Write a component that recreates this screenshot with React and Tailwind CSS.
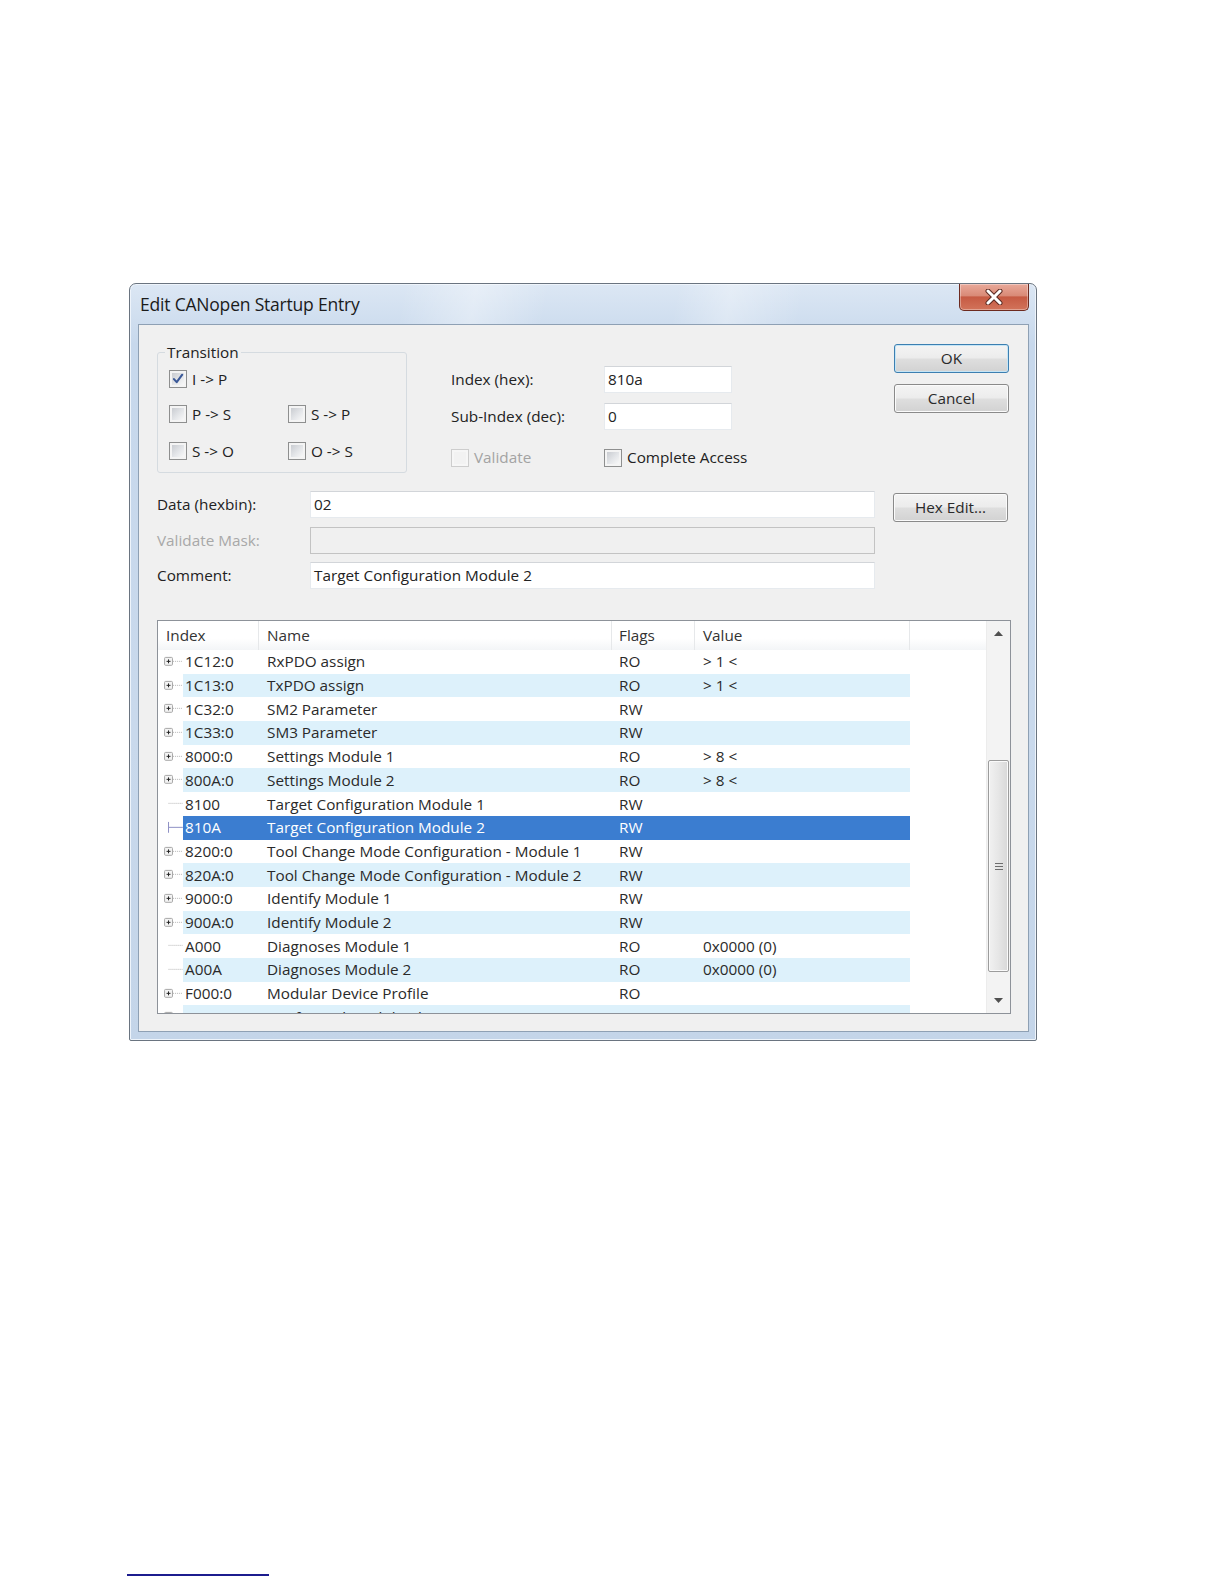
import React from "react";

const rows = [
  { idx: "1C12:0", name: "RxPDO assign", flags: "RO", value: "> 1 <", exp: true },
  { idx: "1C13:0", name: "TxPDO assign", flags: "RO", value: "> 1 <", exp: true },
  { idx: "1C32:0", name: "SM2 Parameter", flags: "RW", value: "", exp: true },
  { idx: "1C33:0", name: "SM3 Parameter", flags: "RW", value: "", exp: true },
  { idx: "8000:0", name: "Settings Module 1", flags: "RO", value: "> 8 <", exp: true },
  { idx: "800A:0", name: "Settings Module 2", flags: "RO", value: "> 8 <", exp: true },
  { idx: "8100", name: "Target Configuration Module 1", flags: "RW", value: "", exp: false },
  { idx: "810A", name: "Target Configuration Module 2", flags: "RW", value: "", exp: false, sel: true },
  { idx: "8200:0", name: "Tool Change Mode Configuration - Module 1", flags: "RW", value: "", exp: true },
  { idx: "820A:0", name: "Tool Change Mode Configuration - Module 2", flags: "RW", value: "", exp: true },
  { idx: "9000:0", name: "Identify Module 1", flags: "RW", value: "", exp: true },
  { idx: "900A:0", name: "Identify Module 2", flags: "RW", value: "", exp: true },
  { idx: "A000", name: "Diagnoses Module 1", flags: "RO", value: "0x0000 (0)", exp: false },
  { idx: "A00A", name: "Diagnoses Module 2", flags: "RO", value: "0x0000 (0)", exp: false },
  { idx: "F000:0", name: "Modular Device Profile", flags: "RO", value: "", exp: true },
  { idx: "F030:0", name: "Configured Module Ident List", flags: "RO", value: "", exp: true },
];

function Check({ checked, disabled }) {
  return (
    <span
      className={
        disabled
          ? "block w-[18px] h-[18px] flex-none border border-[#cdcdcd] bg-[#f6f6f6] p-[2px]"
          : "block w-[18px] h-[18px] flex-none border border-[#8e8f8f] bg-[#f4f4f4] p-[2px]"
      }
    >
      <span
        className={
          disabled
            ? "block w-full h-full bg-[#f2f2f2]"
            : "block w-full h-full bg-[linear-gradient(135deg,#c9ccd1,#e4e6e9_55%,#f8f8f8)]"
        }
      >
        {checked && (
          <svg viewBox="0 0 11 11" className="block w-full h-full">
            <path d="M1.8 5.6 L4.3 8.4 L9.4 1.6" fill="none" stroke="#3b5998" strokeWidth="1.9" strokeLinecap="round" strokeLinejoin="round" />
          </svg>
        )}
      </span>
    </span>
  );
}

function Btn({ children, def, className = "" }) {
  return (
    <div
      className={
        (def
          ? "border-[#3c7fb1] shadow-[inset_0_0_0_1px_#c5e5f6] "
          : "border-[#8a8a8a] shadow-[inset_0_0_0_1px_#fbfbfb] ") +
        "w-[115px] h-[29px] rounded-[3px] border bg-[linear-gradient(#f4f4f4,#ececec_48%,#dedede_52%,#d2d2d2)] flex items-center justify-center text-[15.3px] text-[#2a2a2a] " +
        className
      }
    >
      {children}
    </div>
  );
}

function Input({ w, children, disabled }) {
  return (
    <div
      className={
        (disabled
          ? "bg-[#f0f0f0] border-[#c3c3c3] "
          : "bg-white border-[#e6eaee] border-t-[#d2d5d9] ") +
        "h-[27px] border flex items-center pl-[3px] text-[15.3px] text-[#222]"
      }
      style={{ width: w }}
    >
      {children}
    </div>
  );
}

function Tree({ exp, sel }) {
  return (
    <svg width="25" height="23.69" viewBox="0 0 25 24" className="block flex-none">
      {exp ? (
        <>
          <rect x="6.5" y="7.5" width="8" height="8" rx="1" fill="#f4f4f4" stroke="#a6a6a6" />
          <path d="M8.5 11.5 H12.5 M10.5 9.5 V13.5" stroke="#222" strokeWidth="1" />
          <path d="M15 11.5 H25" stroke="#b5b5b5" strokeWidth="1" strokeDasharray="1 1" />
        </>
      ) : (
        <>
          {sel && <path d="M10.5 6 V17" stroke="#8d8fc4" strokeWidth="1" />}
          <path d="M10.5 11.5 H25" stroke={sel ? "#8d8fc4" : "#b5b5b5"} strokeWidth="1" strokeDasharray={sel ? "0" : "1 1"} />
        </>
      )}
    </svg>
  );
}

function Triangle({ up }) {
  return (
    <svg width="9" height="5" viewBox="0 0 9 5" className="block">
      <path d={up ? "M0 5 L4.5 0 L9 5 Z" : "M0 0 L4.5 5 L9 0 Z"} fill="#505050" />
    </svg>
  );
}

export default function App() {
  return (
    <div className="w-[1224px] h-[1584px] bg-white overflow-hidden pt-[283px] pl-[127px] font-['Open_Sans','Noto_Sans',sans-serif] text-[#222]">
      {/* Window */}
      <div className="ml-[2px] w-[908px] h-[758px] rounded-t-[7px] rounded-b-[2px] border border-[#6a7480] bg-[linear-gradient(180deg,#dce7f4,#c7d8ec_8%,#c9d9ec_60%,#c4d5e9)] flex flex-col shadow-[inset_0_0_0_1px_#eef4fb]">
        {/* Title bar */}
        <div className="h-[40px] flex items-start bg-[linear-gradient(100deg,rgba(255,255,255,0)_0%,rgba(255,255,255,0)_30%,rgba(255,255,255,0.35)_38%,rgba(255,255,255,0)_46%,rgba(255,255,255,0)_60%,rgba(255,255,255,0.3)_66%,rgba(255,255,255,0)_74%)]">
          <div className="pl-[10px] pt-[7px] text-[17.5px] text-[#1b1b1b] tracking-[-0.2px]">Edit CANopen Startup Entry</div>
          <div className="ml-auto mr-[7px] w-[70px] h-[27px] rounded-b-[5px] border border-t-0 border-[#6d2a1f] bg-[linear-gradient(#e9a99a,#d98a77_45%,#c65a43_50%,#d2735a)] flex items-center justify-center shadow-[inset_0_0_0_1px_rgba(255,255,255,0.35)]">
            <svg width="18" height="16" viewBox="0 0 18 16">
              <path d="M3 2 L15 14 M15 2 L3 14" stroke="#5a2a22" strokeWidth="5" strokeLinecap="round" />
              <path d="M3 2 L15 14 M15 2 L3 14" stroke="#ffffff" strokeWidth="3" strokeLinecap="round" />
            </svg>
          </div>
        </div>

        {/* Client area */}
        <div className="ml-[8px] w-[891px] h-[708px] border border-[#8ea0b4] bg-[#f0f0f0] flex flex-col text-[15.3px]">
          {/* Top section */}
          <div className="flex items-start">
            <fieldset className="ml-[18px] mt-[17px] w-[250px] h-[131px] border border-[#d5dbe0] rounded-[3px] pl-[11px]">
              <legend className="ml-[-4px] px-[2px] h-[20px] leading-[20px] text-[#222]">Transition</legend>
              <div className="flex flex-col">
                <div className="h-[20px] mt-[7px] flex items-center">
                  <div className="flex items-center gap-[5px]">
                    <Check checked />
                    <span>I -&gt; P</span>
                  </div>
                </div>
                <div className="h-[20px] mt-[15px] flex items-center">
                  <div className="w-[119px] flex items-center gap-[5px]">
                    <Check />
                    <span>P -&gt; S</span>
                  </div>
                  <div className="flex items-center gap-[5px]">
                    <Check />
                    <span>S -&gt; P</span>
                  </div>
                </div>
                <div className="h-[20px] mt-[17px] flex items-center">
                  <div className="w-[119px] flex items-center gap-[5px]">
                    <Check />
                    <span>S -&gt; O</span>
                  </div>
                  <div className="flex items-center gap-[5px]">
                    <Check />
                    <span>O -&gt; S</span>
                  </div>
                </div>
              </div>
            </fieldset>

            <div className="ml-[44px] mt-[41px] w-[281px] flex-none flex flex-col">
              <div className="flex items-center h-[27px]">
                <div className="w-[153px] flex-none">Index (hex):</div>
                <Input w={128}>810a</Input>
              </div>
              <div className="flex items-center h-[27px] mt-[10px]">
                <div className="w-[153px] flex-none">Sub-Index (dec):</div>
                <Input w={128}>0</Input>
              </div>
              <div className="flex items-center h-[27px] mt-[14px]">
                <div className="w-[153px] flex-none flex items-center gap-[5px] text-[#a3a3a3]">
                  <Check disabled />
                  <span>Validate</span>
                </div>
                <div className="flex-none flex items-center gap-[5px] whitespace-nowrap">
                  <Check />
                  <span>Complete Access</span>
                </div>
              </div>
            </div>

            <div className="ml-[162px] mt-[19px] flex flex-col gap-[11px]">
              <Btn def>OK</Btn>
              <Btn>Cancel</Btn>
            </div>
          </div>

          {/* Form rows */}
          <div className="mt-[18px] ml-[18px] flex flex-col gap-[8.5px]">
            <div className="flex items-start h-[27px]">
              <div className="w-[153px] h-[27px] flex items-center">Data (hexbin):</div>
              <Input w={565}>02</Input>
              <Btn className="ml-[18px] mt-[2px]">Hex Edit...</Btn>
            </div>
            <div className="flex items-center h-[27px]">
              <div className="w-[153px] text-[#a8a8a8]">Validate Mask:</div>
              <Input w={565} disabled></Input>
            </div>
            <div className="flex items-center h-[27px]">
              <div className="w-[153px]">Comment:</div>
              <Input w={565}>Target Configuration Module 2</Input>
            </div>
          </div>

          {/* List */}
          <div className="mt-[31px] ml-[18px] w-[854px] h-[394px] border border-[#8d9299] bg-white flex">
            <div className="flex-1 flex flex-col overflow-hidden">
              <div className="h-[29px] flex-none flex bg-[linear-gradient(#ffffff,#ffffff_60%,#f3f5f7)] text-[#333]">
                <div className="w-[101px] pl-[8px] flex items-center border-r border-[#e6e8ea]">Index</div>
                <div className="w-[353px] pl-[8px] flex items-center border-r border-[#e6e8ea]">Name</div>
                <div className="w-[83px] pl-[7px] flex items-center border-r border-[#e6e8ea]">Flags</div>
                <div className="w-[215px] pl-[8px] flex items-center border-r border-[#e6e8ea]">Value</div>
                <div className="flex-1"></div>
              </div>
              {rows.map((r, i) => (
                <div key={r.idx} className="h-[23.69px] flex-none flex">
                  <Tree exp={r.exp} sel={r.sel} />
                  <div
                    className={
                      (r.sel
                        ? "bg-[#3b7dd0] text-white "
                        : i % 2 === 1
                        ? "bg-[#ddf1fb] text-[#2a2a2a] "
                        : "bg-white text-[#2a2a2a] ") + "flex items-center"
                    }
                  >
                    <div className="w-[76px] pl-[2px] whitespace-nowrap">{r.idx}</div>
                    <div className="w-[353px] pl-[8px] whitespace-nowrap">{r.name}</div>
                    <div className="w-[83px] pl-[7px] whitespace-nowrap">{r.flags}</div>
                    <div className="w-[215px] pl-[8px] whitespace-nowrap">{r.value}</div>
                  </div>
                </div>
              ))}
            </div>
            {/* Scrollbar */}
            <div className="w-[24px] flex-none flex flex-col bg-[#f3f3f3] border-l border-[#ececec]">
              <div className="h-[25px] flex items-center justify-center">
                <Triangle up />
              </div>
              <div className="flex-1">
                <div className="mt-[114px] mx-[1px] h-[212px] rounded-[2px] border border-[#9c9c9c] bg-[linear-gradient(90deg,#f1f1f1,#e6e6e6_50%,#d8d8d8)] flex items-center justify-center shadow-[inset_0_0_0_1px_#fafafa]">
                  <div className="flex flex-col gap-[2px]">
                    <div className="w-[8px] h-[1px] bg-[#6e6e6e]"></div>
                    <div className="w-[8px] h-[1px] bg-[#6e6e6e]"></div>
                    <div className="w-[8px] h-[1px] bg-[#6e6e6e]"></div>
                  </div>
                </div>
              </div>
              <div className="h-[25px] flex items-center justify-center">
                <Triangle />
              </div>
            </div>
          </div>
        </div>
      </div>

      {/* Footnote separator */}
      <div className="mt-[533px] w-[142px] h-[2px] bg-[#1c1c8e]"></div>
    </div>
  );
}
